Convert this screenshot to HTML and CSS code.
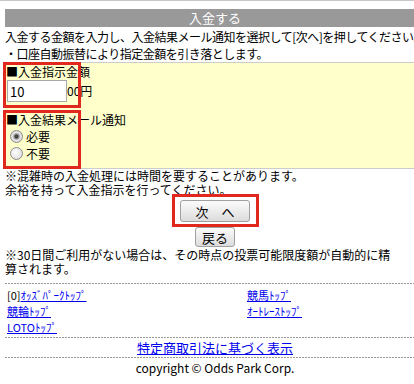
FILE: index.html
```html
<!DOCTYPE html>
<html lang="ja">

<head>
  <meta charset="UTF-8">
  <meta name="viewport" content="width=device-width, initial-scale=1.0">
  <title>入金する</title>
  <link rel="stylesheet" href="styles.css">
</head>

<body>
  <div id="page">
    <h1 class="page-title">入金する</h1>
    <p class="intro">入金する金額を入力し、入金結果メール通知を選択して[次へ]を押してください。<br>・口座自動振替により指定金額を引き落とします。</p>

    <form class="deposit-form">
      <div class="field">
        <div class="field-label">■入金指示金額</div>
        <div class="amount-row">
          <input class="amount" type="text" value="10">
          <span>00円</span>
        </div>
        <span class="mark"></span>
      </div>
      <div class="field field-mail">
        <div class="field-label">■入金結果メール通知</div>
        <label class="choice"><input type="radio" name="mail" checked>必要</label>
        <label class="choice"><input type="radio" name="mail">不要</label>
        <span class="mark"></span>
      </div>
    </form>

    <p class="note">※混雑時の入金処理には時間を要することがあります。<br>余裕を持って入金指示を行ってください。</p>

    <div class="actions">
      <div class="next-wrap">
        <button class="btn btn-next" type="button">次　へ</button>
        <span class="mark"></span>
      </div>
      <button class="btn btn-back" type="button">戻る</button>
    </div>

    <p class="note note-expire">※30日間ご利用がない場合は、その時点の投票可能限度額が自動的に精<br>算されます。</p>

    <div class="rule"></div>
    <div class="site-links">
      <div class="link-cell">[0]<a href="#">ｵｯｽﾞﾊﾟｰｸﾄｯﾌﾟ</a></div>
      <div class="link-cell"><a href="#">競馬ﾄｯﾌﾟ</a></div>
      <div class="link-cell"><a href="#">競輪ﾄｯﾌﾟ</a></div>
      <div class="link-cell"><a href="#">ｵｰﾄﾚｰｽﾄｯﾌﾟ</a></div>
      <div class="link-cell"><a href="#">LOTOﾄｯﾌﾟ</a></div>
    </div>
    <div class="rule"></div>
    <div class="legal"><a href="#">特定商取引法に基づく表示</a></div>
    <div class="rule"></div>
    <div class="copyright">copyright © Odds Park Corp.</div>
  </div>
</body>

</html>
```

FILE: styles.css
```css
html,
body {
  overflow: hidden;
}

body {
  margin: 0;
  border-top: 1px solid #c8c8c8;
  font-family: "Noto Sans CJK JP", sans-serif;
  font-size: 12px;
  color: #000;
}

a {
  color: #0000ee;
}

#page {
  width: 420px;
  margin-left: 5px;
  padding-top: 8px;
}

.page-title {
  margin: 0;
  height: 18px;
  line-height: 18px;
  background-color: #999;
  color: #fff;
  font-size: 13px;
  font-weight: normal;
  text-align: center;
}

.intro {
  margin: 0;
  padding-top: 1px;
  line-height: 17px;
  letter-spacing: -0.5px;
  white-space: nowrap;
  border-bottom: 1px solid #ccc;
}

.deposit-form {
  margin: 0;
  padding: 1px 0 6px 1px;
  background-color: #ffffcc;
  border-bottom: 1px solid #ccc;
}

.field {
  position: relative;
  line-height: 16px;
}

.field-mail {
  margin-top: 10px;
}

.field-label {
  height: 16px;
}

.amount-row {
  display: flex;
  align-items: center;
  height: 22px;
}

.amount {
  box-sizing: border-box;
  width: 60px;
  height: 22px;
  margin: 0 0 0 1px;
  padding: 0 2px;
  border: 1px solid #a9a9a9;
  font-family: "Noto Sans CJK JP", sans-serif;
  font-size: 13px;
}

.choice {
  display: flex;
  align-items: center;
  height: 17px;

  input {
    appearance: none;
    width: 13px;
    height: 13px;
    margin: 0 3px 0 4px;
    border: 1px solid #8c8c8c;
    border-radius: 50%;
    background: radial-gradient(circle at 40% 40%, #fff, #d4d4d4);
  }

  input:checked {
    background: radial-gradient(circle, #444 0 1.5px, #9a9a9a 2.5px, #e6e6e6 4px, #cfcfcf);
  }
}

.mark {
  position: absolute;
  top: -2px;
  left: -3px;
  width: 78px;
  height: 46px;
  box-sizing: border-box;
  border: 3px solid #e0281e;
  pointer-events: none;
}

.field-mail .mark {
  height: 59px;
}

.note {
  margin: 0;
  line-height: 14px;
  white-space: nowrap;
}

.note-expire {
  margin-top: 1px;
}

.actions {
  display: flex;
  flex-direction: column;
  align-items: center;
  gap: 5px;
  margin-top: 3px;
}

.next-wrap {
  position: relative;
  display: flex;

  .mark {
    top: -6px;
    left: -8px;
    width: 87px;
    height: 33px;
  }
}

.btn {
  padding: 0;
  border: 1px solid #a0a0a0;
  border-radius: 3px;
  background: linear-gradient(#fbfbfb, #dcdcdc);
  font-family: "Noto Sans CJK JP", sans-serif;
  font-size: 13px;
  color: #000;
}

.btn-next {
  width: 70px;
  height: 22px;
}

.btn-back {
  width: 40px;
  height: 20px;
}

.rule {
  height: 1px;
  background: repeating-linear-gradient(90deg, #999 0 2px, transparent 2px 3px);
}

.note-expire + .rule {
  margin-top: 7px;
}

.site-links {
  display: flex;
  flex-wrap: wrap;
  padding: 3px 0 2px 2px;
  font-size: 11px;
  line-height: 16px;
}

.link-cell {
  box-sizing: border-box;
  width: 240px;
}

.link-cell:nth-child(even) {
  width: 170px;
}

.legal {
  line-height: 19px;
  font-size: 13px;
  text-align: center;
}

.copyright {
  line-height: 20px;
  text-align: center;
}
```
